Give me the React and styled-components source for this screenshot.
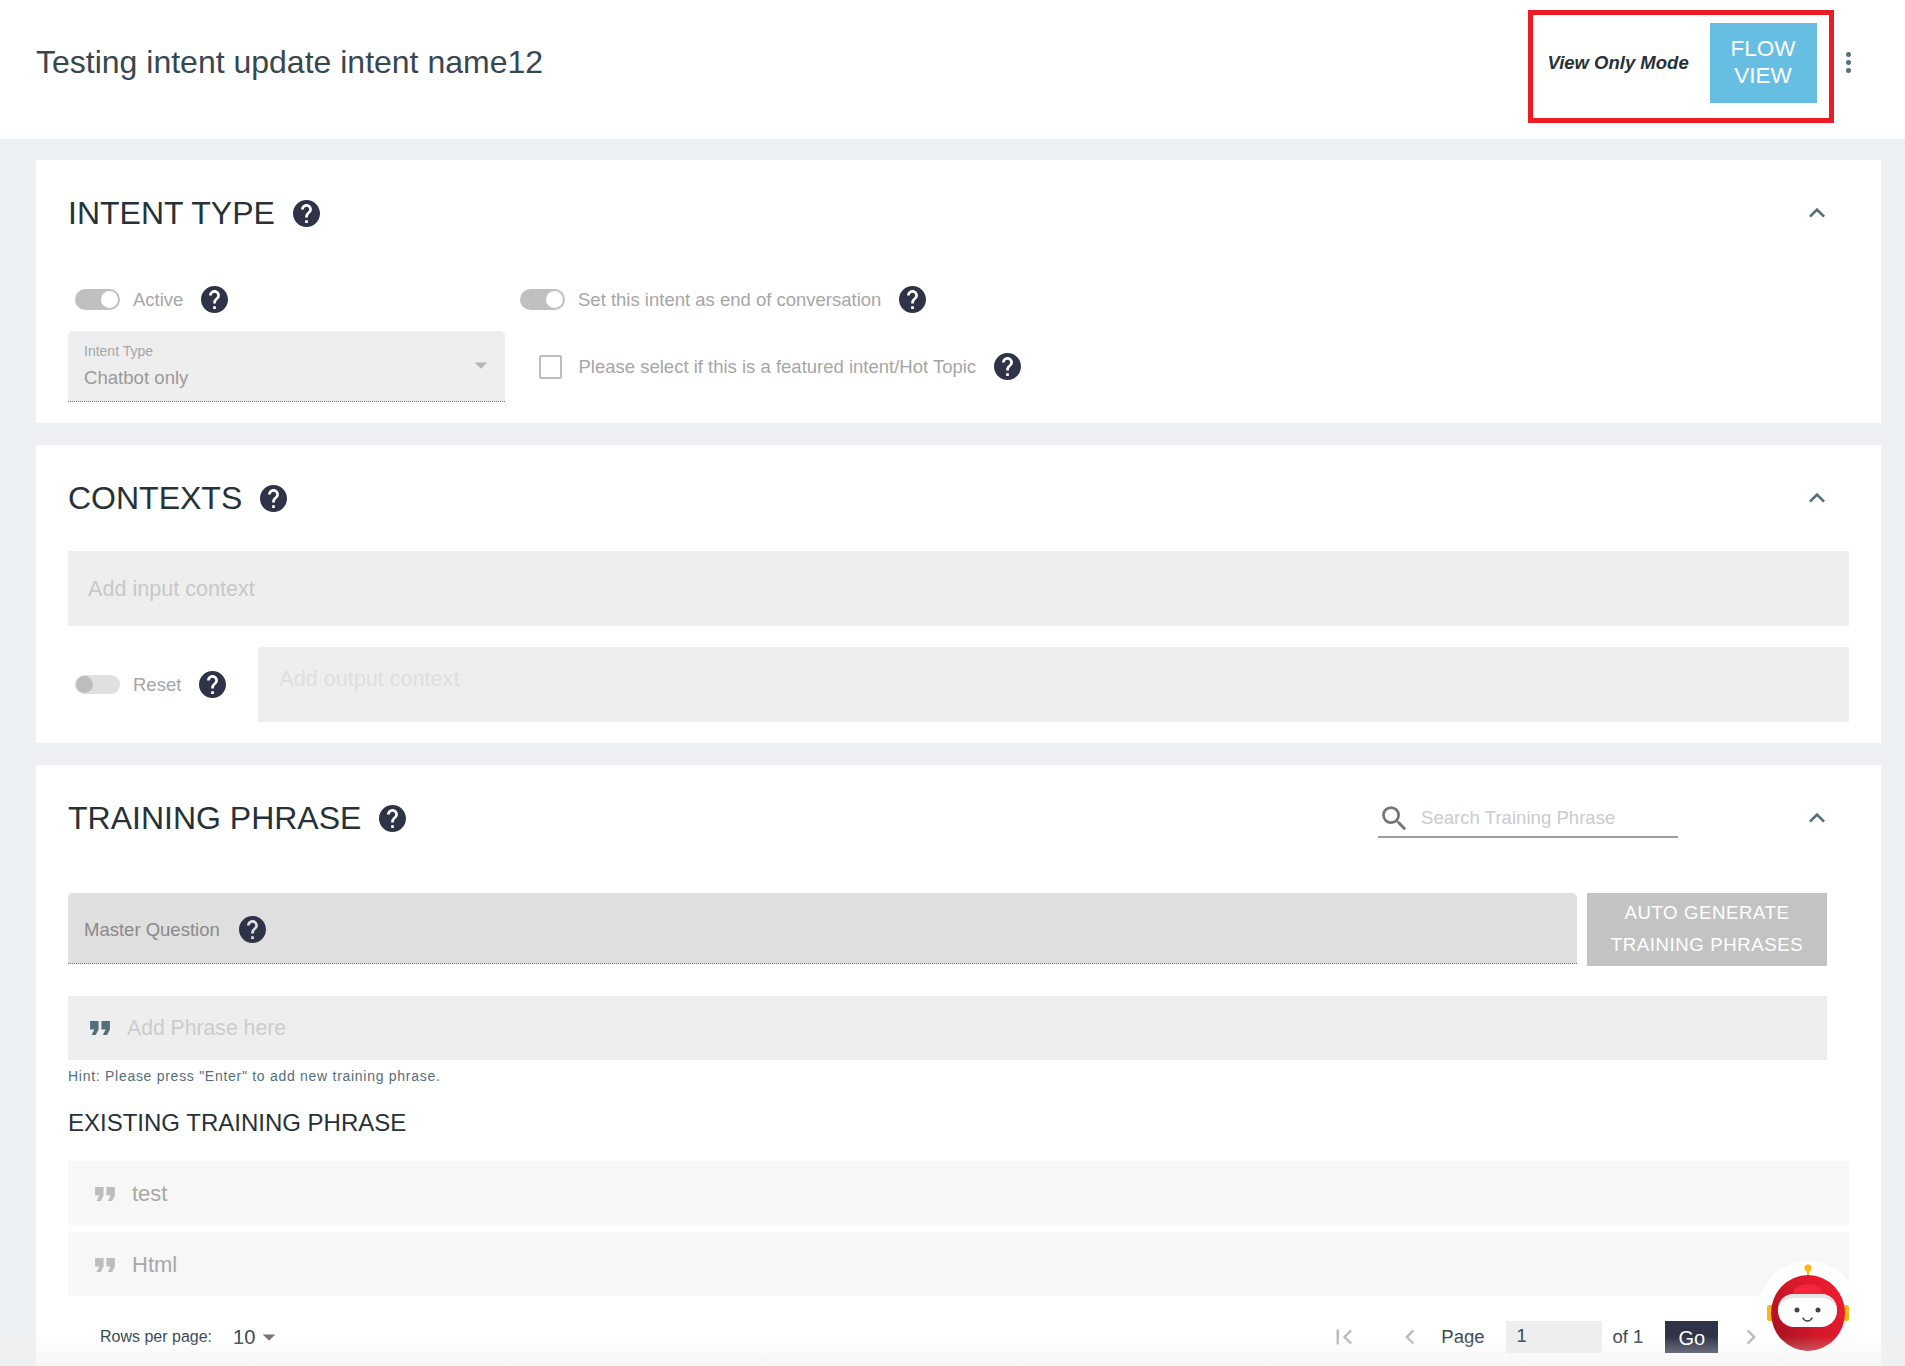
import React from "react";
import styled, { createGlobalStyle } from "styled-components";
import {
  MdExpandLess,
  MdSearch,
  MdFormatQuote,
  MdFirstPage,
  MdChevronLeft,
  MdChevronRight,
  MdArrowDropDown,
} from "react-icons/md";

const GlobalStyle = createGlobalStyle`
  html, body { margin: 0; padding: 0; background: #eef1f3; }
  * { box-sizing: border-box; }
  body { font-family: "Liberation Sans", Arial, sans-serif; color: #263238; }
`;

const Page = styled.div`
  position: relative;
  height: 1366px;
  overflow: hidden;
`;

const TopBar = styled.header`
  height: 139px;
  background: #fff;
  display: flex;
  align-items: center;
  padding: 0 54px 15px 36px;
`;

const PageTitle = styled.h1`
  flex: 1;
  margin: 0;
  font-size: 32px;
  font-weight: 400;
  color: #37474f;
`;

const ModeBox = styled.div`
  width: 306px;
  height: 113px;
  margin-top: 9px;
  border: 5px solid #ed1c24;
  display: flex;
  align-items: center;
  justify-content: space-between;
  padding: 0 12px 7px 15px;
`;

const ModeLabel = styled.span`
  font-size: 18.5px;
  font-weight: 700;
  font-style: italic;
  color: #263238;
`;

const FlowButton = styled.button`
  width: 107px;
  height: 80px;
  border: 0;
  padding: 0 0 2px;
  background: #67bee3;
  color: #fff;
  font: 400 22.5px/27px "Liberation Sans", Arial, sans-serif;
`;

const Kebab = styled.div`
  width: 5px;
  margin-left: 12.5px;
  display: flex;
  flex-direction: column;
  gap: 3px;
  i {
    display: block;
    width: 5px;
    height: 5px;
    border-radius: 50%;
    background: #546e7a;
  }
`;

const Main = styled.main`
  padding: 21px 24px 0 36px;
  display: flex;
  flex-direction: column;
  gap: 22px;
`;

const Card = styled.section`
  background: #fff;
  padding: 0 32px ${(p) => p.$pad || 0}px;
  height: ${(p) => (p.$h ? `${p.$h}px` : "auto")};
`;

const SectionHead = styled.div`
  height: 106px;
  display: flex;
  align-items: center;
  gap: 18px;
`;

const Heading = styled.h2`
  margin: 0;
  font-size: 32px;
  font-weight: 400;
  color: #263238;
`;

const HelpSvg = styled.svg`
  width: 27px;
  height: 27px;
  flex: none;
  fill: #2f3347;
`;

const Help = () => (
  <HelpSvg viewBox="2 2 20 20">
    <path d="M12 2C6.48 2 2 6.48 2 12s4.48 10 10 10 10-4.48 10-10S17.52 2 12 2zm1 17h-2v-2h2v2zm2.07-7.75l-.9.92C13.45 12.9 13 13.5 13 15h-2v-.5c0-1.1.45-2.1 1.17-2.83l1.24-1.26c.37-.36.59-.86.59-1.41 0-1.1-.9-2-2-2s-2 .9-2 2H8c0-2.21 1.79-4 4-4s4 1.79 4 4c0 .88-.36 1.68-.93 2.25z" />
  </HelpSvg>
);

const Collapse = styled(MdExpandLess)`
  width: 32px;
  height: 32px;
  margin-left: auto;
  margin-right: 16px;
  color: #546e7a;
`;

const Row = styled.div`
  display: flex;
  align-items: center;
`;

const ToggleRow = styled(Row)`
  height: 27px;
  margin-top: 20px;
`;

const SelectRow = styled(Row)`
  margin-top: 18px;
`;

const OptionGroup = styled.div`
  display: flex;
  align-items: center;
  width: ${(p) => (p.$w ? `${p.$w}px` : "auto")};
  padding-left: ${(p) => p.$left || 0}px;
  gap: 18px;
`;

const Toggle = styled.span`
  position: relative;
  display: block;
  flex: none;
  width: 45px;
  height: ${(p) => (p.$on ? 21 : 19)}px;
  margin-right: -5px;
  border-radius: 11px;
  background: ${(p) => (p.$on ? "#c0c0c0" : "#e0e0e0")};
  &::after {
    content: "";
    position: absolute;
    top: ${(p) => (p.$on ? 2 : 1)}px;
    ${(p) => (p.$on ? "right: 2px;" : "left: 1px;")}
    width: 17px;
    height: 17px;
    border-radius: 50%;
    background: ${(p) => (p.$on ? "#fff" : "#bdbdbd")};
  }
`;

const OptionText = styled.span`
  font-size: 18.5px;
  color: #a6a6a6;
`;

const SelectBox = styled.div`
  position: relative;
  width: 437px;
  height: 71px;
  padding: 12px 16px 0;
  background: #eee;
  border-radius: 5px 5px 0 0;
  border-bottom: 1px dotted #777;
`;

const SelectLabel = styled.div`
  font-size: 14px;
  line-height: 16px;
  color: #a6a6a6;
`;

const SelectValue = styled.div`
  margin-top: 7px;
  font-size: 18.6px;
  line-height: 24px;
  color: #9a9a9a;
`;

const SelectArrow = styled(MdArrowDropDown)`
  position: absolute;
  right: 9px;
  top: 19px;
  width: 30px;
  height: 30px;
  color: #b5b5b5;
`;

const Checkbox = styled.span`
  display: block;
  flex: none;
  width: 23px;
  height: 24px;
  margin-right: -1.5px;
  border: 2px solid #bdbdbd;
  border-radius: 2px;
`;

const FilledInput = styled.input`
  display: block;
  flex: ${(p) => (p.$grow ? 1 : "none")};
  width: ${(p) => (p.$grow ? "auto" : "100%")};
  height: 75px;
  border: 0;
  outline: 0;
  margin-left: ${(p) => p.$ml || 0}px;
  padding: 0 ${(p) => p.$px || 20}px ${(p) => p.$pb || 0}px;
  background: #eee;
  font: 400 21.6px "Liberation Sans", Arial, sans-serif;
  &::placeholder {
    color: ${(p) => p.$ph || "#c8c8c8"};
    opacity: 1;
  }
`;

const ResetRow = styled(Row)`
  margin-top: 21px;
  padding-left: 7px;
`;

const SearchField = styled.div`
  width: 300px;
  height: 38px;
  margin-left: auto;
  display: flex;
  align-items: center;
  gap: 10px;
  border-bottom: 2px solid #9e9e9e;
  transform: translateY(1px);
  color: #cbcbcb;
  font-size: 18.6px;
  svg {
    width: 33px;
    height: 33px;
    color: #757575;
    flex: none;
  }
`;

const TrainingCollapse = styled(Collapse)`
  margin-left: 105px;
`;

const MasterRow = styled.div`
  display: flex;
  gap: 10px;
  margin: 22px 22px 0 0;
  align-items: flex-start;
`;

const MasterField = styled.div`
  flex: 1;
  height: 71px;
  padding: 3px 0 0 16px;
  display: flex;
  align-items: center;
  gap: 19px;
  background: #dfdfdf;
  border-radius: 5px 5px 0 0;
  border-bottom: 1px dotted #777;
  font-size: 18.5px;
  color: #8a8a8a;
`;

const GenerateButton = styled.button`
  flex: none;
  width: 240px;
  height: 73px;
  border: 0;
  padding: 0 0 2px;
  background: #c3c3c3;
  color: #fff;
  font: 400 18.6px/32px "Liberation Sans", Arial, sans-serif;
  letter-spacing: 0.6px;
`;

const PhraseInput = styled.div`
  height: 64px;
  margin: 30px 22px 0 0;
  padding-left: 15px;
  display: flex;
  align-items: center;
  gap: 10px;
  background: #eee;
  font-size: 21.2px;
  color: #ccc;
`;

const Quote = styled(MdFormatQuote)`
  width: 34px;
  height: 34px;
  flex: none;
  color: ${(p) => p.$color};
`;

const Hint = styled.p`
  margin: 8px 0 0;
  font-size: 14px;
  line-height: 16px;
  letter-spacing: 0.72px;
  color: #546e7a;
`;

const SubHeading = styled.h3`
  margin: 24px 0 23px;
  font-size: 24px;
  line-height: 30px;
  font-weight: 400;
  color: #263238;
`;

const PhraseList = styled.div`
  display: flex;
  flex-direction: column;
  gap: 7px;
`;

const PhraseRow = styled.div`
  height: 64px;
  padding: 2px 0 0 20px;
  display: flex;
  align-items: center;
  gap: 10px;
  background: #f7f7f7;
  font-size: 22px;
  color: #a8a8a8;
`;

const Pager = styled.div`
  height: 32px;
  margin-top: 25px;
  padding-left: 32px;
  display: flex;
  align-items: center;
  font-size: 16px;
  color: #37474f;
`;

const RowsValue = styled.span`
  margin-left: 21px;
  font-size: 20px;
  color: #37474f;
`;

const RowsArrow = styled(MdArrowDropDown)`
  width: 30px;
  height: 30px;
  margin-left: -1px;
  color: #757575;
`;

const PagerIcon = styled.span`
  display: flex;
  margin-left: ${(p) => p.$ml || 0}px;
  color: #bdbdbd;
  svg {
    width: 30px;
    height: 30px;
    display: block;
  }
`;

const PageLabel = styled.span`
  margin-left: ${(p) => p.$ml || 0}px;
  font-size: 18.5px;
  color: #37474f;
`;

const PageInput = styled.div`
  width: 96px;
  height: 32px;
  margin-left: 21px;
  padding-left: 11px;
  background: #eee;
  font-size: 18.5px;
  line-height: 30px;
  color: #37474f;
`;

const GoButton = styled.button`
  width: 53px;
  height: 32px;
  margin-left: 22px;
  border: 0;
  padding: 3px 0 0;
  background: #2f3347;
  color: #fff;
  font: 400 20px "Liberation Sans", Arial, sans-serif;
`;

const BotHolder = styled.div`
  position: absolute;
  left: 1758px;
  top: 1261px;
  width: 100px;
  height: 100px;
  border-radius: 50%;
  background: #fff;
  svg {
    display: block;
    position: absolute;
    inset: 0;
  }
`;

const BottomFade = styled.div`
  position: absolute;
  left: 0;
  right: 0;
  bottom: 0;
  height: 30px;
  background: linear-gradient(rgba(238, 238, 238, 0), rgba(238, 238, 238, 0.55));
  pointer-events: none;
`;

const Bot = () => (
  <BotHolder>
    <svg width="100" height="100" viewBox="0 0 100 100">
      <defs>
        <linearGradient id="botHead" x1="0" y1="1" x2="1" y2="0.3">
          <stop offset="0" stopColor="#9c111b" />
          <stop offset="0.55" stopColor="#d3182a" />
          <stop offset="1" stopColor="#ee1c30" />
        </linearGradient>
      </defs>
      <rect x="49" y="8" width="2" height="8" fill="#fbb812" />
      <circle cx="50" cy="7" r="3.6" fill="#fbb812" />
      <rect x="9" y="44" width="6" height="16" rx="2.5" fill="#fbb812" />
      <rect x="85" y="44" width="6" height="16" rx="2.5" fill="#fbb812" />
      <ellipse cx="50" cy="52" rx="37" ry="38" fill="url(#botHead)" />
      <path d="M35 33c0-13 30-13 30 0z" fill="#f2263c" />
      <rect x="20" y="33" width="59" height="33" rx="16" fill="#fff" />
      <path d="M20 49c0-10 7-16 16-16h27c9 0 16 6 16 16-2-8-8-12-16-12H36c-8 0-14 4-16 12z" fill="#e3e5e7" />
      <circle cx="39" cy="49" r="2.5" fill="#444" />
      <circle cx="60" cy="49" r="2.5" fill="#444" />
      <path d="M45 57c2 4 7 4 9 0" fill="none" stroke="#444" strokeWidth="1.5" strokeLinecap="round" />
    </svg>
  </BotHolder>
);

const App = () => {
  return (
    <Page>
      <GlobalStyle />
      <TopBar>
        <PageTitle>Testing intent update intent name12</PageTitle>
        <ModeBox>
          <ModeLabel>View Only Mode</ModeLabel>
          <FlowButton>
            FLOW
            <br />
            VIEW
          </FlowButton>
        </ModeBox>
        <Kebab>
          <i />
          <i />
          <i />
        </Kebab>
      </TopBar>

      <Main>
        <Card $h={263}>
          <SectionHead>
            <Heading>INTENT TYPE</Heading>
            <Help />
            <Collapse />
          </SectionHead>
          <ToggleRow>
            <OptionGroup $w={452} $left={7}>
              <Toggle $on />
              <OptionText>Active</OptionText>
              <Help />
            </OptionGroup>
            <OptionGroup>
              <Toggle $on />
              <OptionText>Set this intent as end of conversation</OptionText>
              <Help />
            </OptionGroup>
          </ToggleRow>
          <SelectRow>
            <SelectBox>
              <SelectLabel>Intent Type</SelectLabel>
              <SelectValue>Chatbot only</SelectValue>
              <SelectArrow />
            </SelectBox>
            <OptionGroup $left={34}>
              <Checkbox />
              <OptionText>Please select if this is a featured intent/Hot Topic</OptionText>
              <Help />
            </OptionGroup>
          </SelectRow>
        </Card>

        <Card $pad={21}>
          <SectionHead>
            <Heading>CONTEXTS</Heading>
            <Help />
            <Collapse />
          </SectionHead>
          <FilledInput placeholder="Add input context" disabled />
          <ResetRow>
            <OptionGroup>
              <Toggle />
              <OptionText>Reset</OptionText>
              <Help />
            </OptionGroup>
            <FilledInput $grow $ml={32} $px={21} $pb={12} $ph="#dedede" placeholder="Add output context" disabled />
          </ResetRow>
        </Card>

        <Card $pad={60}>
          <SectionHead>
            <Heading>TRAINING PHRASE</Heading>
            <Help />
            <SearchField>
              <MdSearch />
              Search Training Phrase
            </SearchField>
            <TrainingCollapse />
          </SectionHead>
          <MasterRow>
            <MasterField>
              Master Question
              <Help />
            </MasterField>
            <GenerateButton>
              AUTO GENERATE
              <br />
              TRAINING PHRASES
            </GenerateButton>
          </MasterRow>
          <PhraseInput>
            <Quote $color="#546e7a" />
            Add Phrase here
          </PhraseInput>
          <Hint>Hint: Please press "Enter" to add new training phrase.</Hint>
          <SubHeading>EXISTING TRAINING PHRASE</SubHeading>
          <PhraseList>
            <PhraseRow>
              <Quote $color="#bdbdbd" />
              test
            </PhraseRow>
            <PhraseRow>
              <Quote $color="#bdbdbd" />
              Html
            </PhraseRow>
          </PhraseList>
          <Pager>
            Rows per page:
            <RowsValue>10</RowsValue>
            <RowsArrow />
            <PagerIcon $ml={1045}>
              <MdFirstPage />
            </PagerIcon>
            <PagerIcon $ml={36}>
              <MdChevronLeft />
            </PagerIcon>
            <PageLabel $ml={16}>Page</PageLabel>
            <PageInput>1</PageInput>
            <PageLabel $ml={11}>of 1</PageLabel>
            <GoButton>Go</GoButton>
            <PagerIcon $ml={18}>
              <MdChevronRight />
            </PagerIcon>
          </Pager>
        </Card>
      </Main>

      <Bot />
      <BottomFade />
    </Page>
  );
};

export default App;
